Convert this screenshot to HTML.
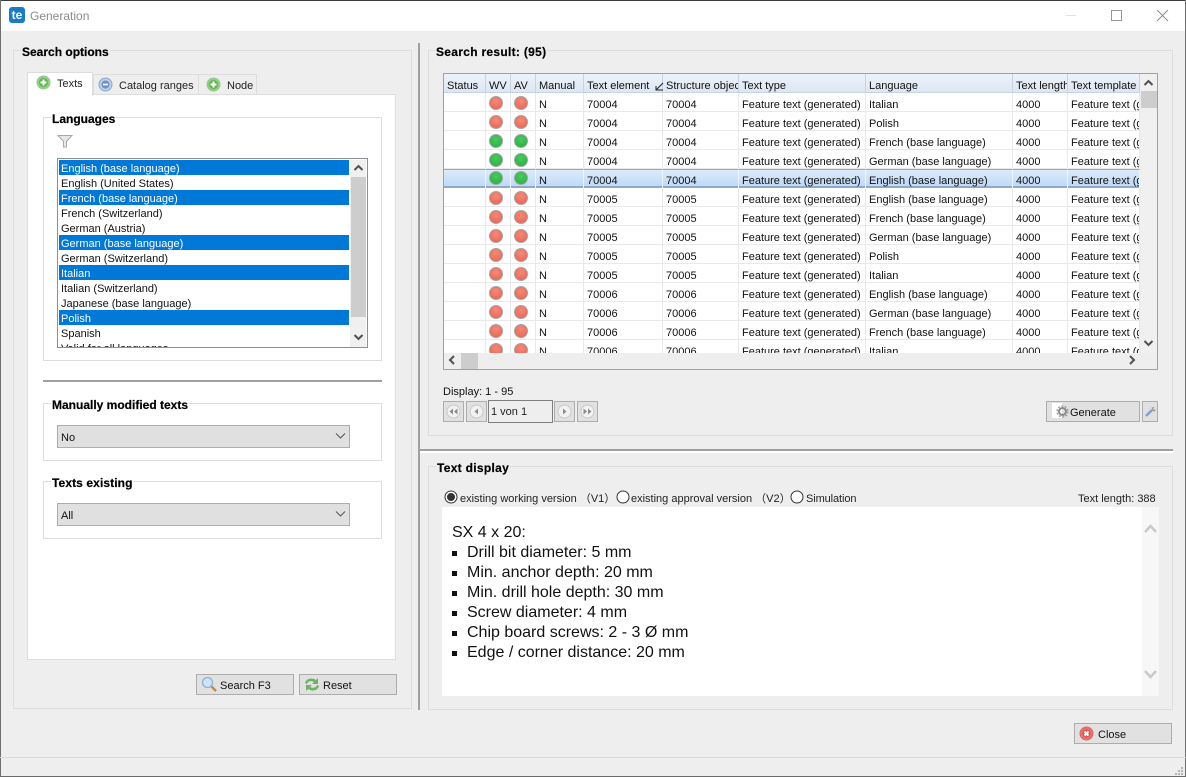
<!DOCTYPE html>
<html><head><meta charset="utf-8"><title>Generation</title>
<style>
*{box-sizing:border-box}
html,body{margin:0;padding:0;width:1186px;height:777px;overflow:hidden;background:#eee;font:11px "Liberation Sans",sans-serif;color:#111}
div,span,svg{position:absolute}
.fs{border:1px solid #ddd}
.lg{font-weight:bold;font-size:12px;color:#000;background:#eee;padding:0 1px;line-height:13px;white-space:nowrap;-webkit-text-stroke:.2px #000}
.lgw{background:#fff}
.t{white-space:nowrap;line-height:13px}
.x{font-size:16px;line-height:20px}
.b{left:452px;width:5px;height:5px;background:#111}
.sel{position:absolute;left:1px;width:290px;height:15px;line-height:19px;padding-left:2px;white-space:nowrap}
.on{background:#0078d7;color:#fff}
.btn{background:#e1e1e1;border:1px solid #adadad}
.dd{background:#e0e0e0;border:1px solid #adadad;line-height:24px;padding-left:3px}
.pg{background:#e1e1e1;border:1px solid #adadad;width:21px;height:21px;top:401px}
table{position:absolute;left:0;top:0;border-collapse:separate;border-spacing:0;table-layout:fixed;width:696px}
td,th{height:19px;padding:6px 0 0 3px;overflow:hidden;white-space:nowrap;font-weight:normal;text-align:left;vertical-align:top;border-right:1px solid #e9e9e9;box-shadow:inset 0 -1px 0 #e9e9e9;font-size:11px;line-height:13px;position:relative;color:#111}
th{border-right:1px solid #c8d3e2;box-shadow:inset 0 -1px 0 #c9d3e0;background:linear-gradient(#eef3fa,#dbe6f3)}
tr.s td{background:linear-gradient(#dcebfb,#bcd7f7);border-top:1px solid #8fa9c9;padding-top:5px;box-shadow:inset 0 -2px 0 #8fa9c9;border-right-color:#eef4fc}
.d{width:14px;height:14px;border-radius:50%;top:3px;left:3px;border:1px solid #a5a5a5}
tr.s .d{top:1px}
.r{background:radial-gradient(circle at 50% 35%,#f58a78,#ea5f4e)}
.g{background:radial-gradient(circle at 50% 35%,#4cc95f,#1fb03c)}
</style></head><body>
<!-- window chrome -->
<div style="left:0;top:0;width:1186px;height:31px;background:#fff"></div>
<div style="left:0;top:0;width:1186px;height:1px;background:#3c3c3c"></div>
<div style="left:0;top:0;width:1px;height:777px;background:#6f6f6f"></div>
<div style="left:1185px;top:0;width:1px;height:777px;background:#6f6f6f"></div>
<div style="left:0;top:776px;width:1186px;height:1px;background:#6a6a6a"></div>
<div style="left:0;top:757px;width:1186px;height:1px;background:#d9d9d9"></div>
<div style="left:9px;top:7px;width:16px;height:16px;border-radius:3px;background:#1a7cc4;color:#fff;font:bold 12px/17px 'Liberation Sans',sans-serif;text-align:center">te</div>
<div class="t" style="left:30px;top:9px;font-size:12px;color:#8a8a8a;line-height:14px">Generation</div>
<div style="left:1066px;top:15px;width:10px;height:1px;background:#e2e2e2"></div>
<div style="left:1111px;top:10px;width:11px;height:11px;border:1px solid #999"></div>
<svg style="left:1156px;top:9px" width="13" height="13"><path d="M1 1L12 12M12 1L1 12" stroke="#8c8c8c" stroke-width="1" fill="none"/></svg>

<!-- left panel -->
<div class="fs" style="left:13px;top:50px;width:399px;height:659px"></div>
<div class="lg" style="left:21px;top:46px">Search options</div>
<div style="left:27px;top:94px;width:369px;height:566px;background:#fff;border:1px solid #ddd"></div>
<div style="left:27px;top:72px;width:66px;height:24px;background:#fff;border:1px solid #ddd;border-bottom:0"></div>
<div style="left:93px;top:74px;width:106px;height:21px;background:#eee;border:1px solid #ddd"></div>
<div style="left:198px;top:74px;width:59px;height:21px;background:#eee;border:1px solid #ddd"></div>
<svg style="left:36px;top:75px" width="15" height="15"><circle cx="7.500" cy="7.500" r="6.500" fill="#8fd07f" stroke="#9cc79a"/><circle cx="7.500" cy="7.500" r="4.500" fill="#5fb552"/><path d="M7.500 4.500v6M4.500 7.500h6" stroke="#fff" stroke-width="2"/></svg>
<div class="t" style="left:57px;top:78px;color:#222">Texts</div>
<svg style="left:98px;top:77px" width="15" height="15"><circle cx="7.500" cy="7.500" r="6.500" fill="#b9cfea" stroke="#8fa9cc"/><circle cx="7.500" cy="7.500" r="4" fill="#6f93c4"/><path d="M5 7.500h5" stroke="#fff" stroke-width="1.600"/></svg>
<div class="t" style="left:119px;top:80px;color:#222">Catalog ranges</div>
<svg style="left:206px;top:77px" width="15" height="15"><circle cx="7.500" cy="7.500" r="6.500" fill="#8fd07f" stroke="#9cc79a"/><circle cx="7.500" cy="7.500" r="4.500" fill="#5fb552"/><path d="M7.500 4.500v6M4.500 7.500h6" stroke="#fff" stroke-width="2"/></svg>
<div class="t" style="left:227px;top:80px;color:#222">Node</div>

<div class="fs" style="left:43px;top:117px;width:339px;height:244px"></div>
<div class="lg lgw" style="left:51px;top:113px">Languages</div>
<svg style="left:57px;top:134px" width="16" height="14"><path d="M1 1.500H15L9.500 7.500V13H6.500V7.500Z" fill="#e6e6e6" stroke="#a9a9a9"/></svg>
<div style="left:57px;top:158px;width:311px;height:190px;background:#fff;border:1px solid #8e8e9a;overflow:hidden">
 <div class="sel on" style="top:1px">English (base language)</div>
 <div class="sel" style="top:16px">English (United States)</div>
 <div class="sel on" style="top:31px">French (base language)</div>
 <div class="sel" style="top:46px">French (Switzerland)</div>
 <div class="sel" style="top:61px">German (Austria)</div>
 <div class="sel on" style="top:76px">German (base language)</div>
 <div class="sel" style="top:91px">German (Switzerland)</div>
 <div class="sel on" style="top:106px">Italian</div>
 <div class="sel" style="top:121px">Italian (Switzerland)</div>
 <div class="sel" style="top:136px">Japanese (base language)</div>
 <div class="sel on" style="top:151px">Polish</div>
 <div class="sel" style="top:166px">Spanish</div>
 <div class="sel" style="top:181px">Valid for all languages</div>
 <div style="left:292px;top:1px;width:16px;height:187px;background:#f0f0f0"></div>
 <div style="left:293px;top:18px;width:15px;height:140px;background:#cdcdcd"></div>
 <svg style="left:293px;top:4px" width="15" height="10"><path d="M3.500 7L7.500 3L11.500 7" stroke="#505050" stroke-width="2" fill="none"/></svg>
 <svg style="left:293px;top:173px" width="15" height="10"><path d="M3.500 3L7.500 7L11.500 3" stroke="#505050" stroke-width="2" fill="none"/></svg>
</div>
<div style="left:43px;top:380px;width:339px;height:2px;background:#a0a0a0"></div>

<div class="fs" style="left:43px;top:403px;width:339px;height:58px"></div>
<div class="lg lgw" style="left:51px;top:399px">Manually modified texts</div>
<div class="dd" style="left:57px;top:425px;width:293px;height:23px">No</div>
<svg style="left:335px;top:432px" width="11" height="8"><path d="M1 1.500L5.500 6L10 1.500" stroke="#555" stroke-width="1" fill="none"/></svg>

<div class="fs" style="left:43px;top:481px;width:339px;height:58px"></div>
<div class="lg lgw" style="left:51px;top:477px;letter-spacing:.1px">Texts existing</div>
<div class="dd" style="left:57px;top:503px;width:293px;height:23px">All</div>
<svg style="left:335px;top:510px" width="11" height="8"><path d="M1 1.500L5.500 6L10 1.500" stroke="#555" stroke-width="1" fill="none"/></svg>

<div class="btn" style="left:196px;top:674px;width:98px;height:21px"></div>
<svg style="left:201px;top:676px" width="16" height="17"><circle cx="6.500" cy="6.500" r="5" fill="#cfe3f7" stroke="#8fb0d4" stroke-width="1.300"/><path d="M10.500 10.500L15 15" stroke="#c08a50" stroke-width="2.500"/></svg>
<div class="t" style="left:220px;top:680px">Search F3</div>
<div class="btn" style="left:299px;top:674px;width:98px;height:21px"></div>
<svg style="left:304px;top:676px" width="16" height="17"><path d="M1 7C2 3 7 1 12 4L14 2V8H8L10 6C7 4.500 4 5 3 8Z" fill="#6eb35f"/><path d="M15 10C14 14 9 16 4 13L2 15V9H8L6 11C9 12.500 12 12 13 9Z" fill="#6eb35f"/></svg>
<div class="t" style="left:323px;top:680px">Reset</div>

<!-- splitters -->
<div style="left:418px;top:43px;width:2px;height:667px;background:#a0a0a0"></div>
<div style="left:420px;top:449px;width:753px;height:2px;background:#a0a0a0"></div>
<div style="left:420px;top:451px;width:753px;height:2px;background:#fff"></div>

<!-- search result -->
<div class="fs" style="left:428px;top:50px;width:745px;height:386px"></div>
<div class="lg" style="left:435px;top:46px;letter-spacing:.3px">Search result: (95)</div>
<div style="left:443px;top:73px;width:715px;height:297px;background:#eee;border:1px solid #8da3bf"></div>
<div style="left:444px;top:74px;width:696px;height:279px;overflow:hidden;background:#fff">
<table>
<colgroup><col style="width:42px"><col style="width:25px"><col style="width:25px"><col style="width:48px"><col style="width:79px"><col style="width:76px"><col style="width:127px"><col style="width:147px"><col style="width:55px"><col style="width:72px"></colgroup>
<tr><th>Status</th><th>WV</th><th>AV</th><th>Manual</th><th>Text element</th><th>Structure object</th><th>Text type</th><th>Language</th><th>Text length</th><th>Text template</th></tr>
<tr><td></td><td><span class="d r"></span></td><td><span class="d r"></span></td><td>N</td><td>70004</td><td>70004</td><td>Feature text (generated)</td><td>Italian</td><td>4000</td><td>Feature text (generated)</td></tr>
<tr><td></td><td><span class="d r"></span></td><td><span class="d r"></span></td><td>N</td><td>70004</td><td>70004</td><td>Feature text (generated)</td><td>Polish</td><td>4000</td><td>Feature text (generated)</td></tr>
<tr><td></td><td><span class="d g"></span></td><td><span class="d g"></span></td><td>N</td><td>70004</td><td>70004</td><td>Feature text (generated)</td><td>French (base language)</td><td>4000</td><td>Feature text (generated)</td></tr>
<tr><td></td><td><span class="d g"></span></td><td><span class="d g"></span></td><td>N</td><td>70004</td><td>70004</td><td>Feature text (generated)</td><td>German (base language)</td><td>4000</td><td>Feature text (generated)</td></tr>
<tr class="s"><td></td><td><span class="d g"></span></td><td><span class="d g"></span></td><td>N</td><td>70004</td><td>70004</td><td>Feature text (generated)</td><td>English (base language)</td><td>4000</td><td>Feature text (generated)</td></tr>
<tr><td></td><td><span class="d r"></span></td><td><span class="d r"></span></td><td>N</td><td>70005</td><td>70005</td><td>Feature text (generated)</td><td>English (base language)</td><td>4000</td><td>Feature text (generated)</td></tr>
<tr><td></td><td><span class="d r"></span></td><td><span class="d r"></span></td><td>N</td><td>70005</td><td>70005</td><td>Feature text (generated)</td><td>French (base language)</td><td>4000</td><td>Feature text (generated)</td></tr>
<tr><td></td><td><span class="d r"></span></td><td><span class="d r"></span></td><td>N</td><td>70005</td><td>70005</td><td>Feature text (generated)</td><td>German (base language)</td><td>4000</td><td>Feature text (generated)</td></tr>
<tr><td></td><td><span class="d r"></span></td><td><span class="d r"></span></td><td>N</td><td>70005</td><td>70005</td><td>Feature text (generated)</td><td>Polish</td><td>4000</td><td>Feature text (generated)</td></tr>
<tr><td></td><td><span class="d r"></span></td><td><span class="d r"></span></td><td>N</td><td>70005</td><td>70005</td><td>Feature text (generated)</td><td>Italian</td><td>4000</td><td>Feature text (generated)</td></tr>
<tr><td></td><td><span class="d r"></span></td><td><span class="d r"></span></td><td>N</td><td>70006</td><td>70006</td><td>Feature text (generated)</td><td>English (base language)</td><td>4000</td><td>Feature text (generated)</td></tr>
<tr><td></td><td><span class="d r"></span></td><td><span class="d r"></span></td><td>N</td><td>70006</td><td>70006</td><td>Feature text (generated)</td><td>German (base language)</td><td>4000</td><td>Feature text (generated)</td></tr>
<tr><td></td><td><span class="d r"></span></td><td><span class="d r"></span></td><td>N</td><td>70006</td><td>70006</td><td>Feature text (generated)</td><td>French (base language)</td><td>4000</td><td>Feature text (generated)</td></tr>
<tr><td></td><td><span class="d r"></span></td><td><span class="d r"></span></td><td>N</td><td>70006</td><td>70006</td><td>Feature text (generated)</td><td>Italian</td><td>4000</td><td>Feature text (generated)</td></tr>
</table>
<svg style="left:211px;top:8px" width="9" height="9"><path d="M1 8L8 1M1 4V8H8" stroke="#222" stroke-width="1" fill="none"/></svg>
</div>
<div style="left:1141px;top:74px;width:16px;height:279px;background:#f0f0f0"></div>
<div style="left:1141px;top:91px;width:16px;height:17px;background:#cdcdcd"></div>
<svg style="left:1141px;top:78px" width="15" height="10"><path d="M3.500 7L7.500 3L11.500 7" stroke="#505050" stroke-width="2" fill="none"/></svg>
<svg style="left:1141px;top:338px" width="15" height="10"><path d="M3.500 3L7.500 7L11.500 3" stroke="#505050" stroke-width="2" fill="none"/></svg>
<div style="left:461px;top:353px;width:17px;height:16px;background:#cdcdcd"></div>
<svg style="left:447px;top:354px" width="10" height="12"><path d="M7 2L3 6L7 10" stroke="#505050" stroke-width="2" fill="none"/></svg>
<svg style="left:1127px;top:354px" width="10" height="12"><path d="M3 2L7 6L3 10" stroke="#505050" stroke-width="2" fill="none"/></svg>

<div class="t" style="left:443px;top:386px">Display: 1 - 95</div>
<div class="pg" style="left:443px"></div>
<svg style="left:445px;top:403px" width="17" height="17"><circle cx="8.500" cy="8.500" r="6.500" fill="#f2f2f2" stroke="#c8c8c8"/><path d="M8 5.500V11.500L4.500 8.500ZM12.500 5.500V11.500L9 8.500Z" fill="#8b8b8b"/></svg>
<div class="pg" style="left:466px"></div>
<svg style="left:468px;top:403px" width="17" height="17"><circle cx="8.500" cy="8.500" r="6.500" fill="#f2f2f2" stroke="#c8c8c8"/><path d="M10 5.500V11.500L6.500 8.500Z" fill="#8b8b8b"/></svg>
<div style="left:488px;top:400px;width:65px;height:23px;background:#eee;border:1px solid #7f7f7f;line-height:23px;padding-left:2px;color:#222">1 von 1</div>
<div class="pg" style="left:554px"></div>
<svg style="left:556px;top:403px" width="17" height="17"><circle cx="8.500" cy="8.500" r="6.500" fill="#f2f2f2" stroke="#c8c8c8"/><path d="M7 5.500V11.500L10.500 8.500Z" fill="#8b8b8b"/></svg>
<div class="pg" style="left:577px"></div>
<svg style="left:579px;top:403px" width="17" height="17"><circle cx="8.500" cy="8.500" r="6.500" fill="#f2f2f2" stroke="#c8c8c8"/><path d="M4.500 5.500V11.500L8 8.500ZM9 5.500V11.500L12.500 8.500Z" fill="#8b8b8b"/></svg>

<div class="btn" style="left:1046px;top:401px;width:94px;height:21px"></div>
<div style="left:1052px;top:403px;width:10px;height:15px;background:#fff"></div>
<svg style="left:1056px;top:405px" width="13" height="13"><circle cx="6.500" cy="6.500" r="3.500" fill="none" stroke="#888" stroke-width="2"/><circle cx="6.500" cy="6.500" r="5.500" fill="none" stroke="#999" stroke-width="1.300" stroke-dasharray="2 1.500"/></svg>
<div class="t" style="left:1070px;top:407px">Generate</div>
<div class="btn" style="left:1142px;top:401px;width:16px;height:21px"></div>
<svg style="left:1144px;top:405px" width="12" height="13"><path d="M2 11L8 5" stroke="#7f9fd6" stroke-width="2.500"/><path d="M7.500 2.500L10.500 2L9 4L10 5L11.500 3.500L11 6.500L8.500 6Z" fill="#9a9a9a"/></svg>

<!-- text display -->
<div class="fs" style="left:428px;top:466px;width:745px;height:244px"></div>
<div class="lg" style="left:436px;top:462px;letter-spacing:.3px">Text display</div>
<svg style="left:444px;top:490px" width="14" height="14"><circle cx="7" cy="7" r="6" fill="#fff" stroke="#333"/><circle cx="7" cy="7" r="4" fill="#333"/></svg>
<div class="t" style="left:460px;top:493px;color:#222">existing working version （V1）</div>
<svg style="left:616px;top:490px" width="14" height="14"><circle cx="7" cy="7" r="6" fill="#fff" stroke="#333"/></svg>
<div class="t" style="left:631px;top:493px;color:#222">existing approval version （V2）</div>
<svg style="left:790px;top:490px" width="14" height="14"><circle cx="7" cy="7" r="6" fill="#fff" stroke="#333"/></svg>
<div class="t" style="left:806px;top:493px;color:#222;letter-spacing:-.1px">Simulation</div>
<div class="t" style="left:1078px;top:493px;color:#222">Text length: 388</div>
<div style="left:442px;top:507px;width:717px;height:189px;background:#fff"></div>
<div style="left:1142px;top:507px;width:17px;height:189px;background:#f7f7f7"></div>
<svg style="left:1143px;top:522px" width="15" height="13"><path d="M2 10L7.500 4L13 10" stroke="#c9c9c9" stroke-width="2.500" fill="none"/></svg>
<svg style="left:1143px;top:668px" width="15" height="13"><path d="M2 3L7.500 9L13 3" stroke="#c9c9c9" stroke-width="2.500" fill="none"/></svg>
<div class="t x" style="left:452px;top:523px">SX 4 x 20:</div>
<div class="b" style="top:551px"></div>
<div class="t x" style="left:467px;top:543px">Drill bit diameter: 5 mm</div>
<div class="b" style="top:571px"></div>
<div class="t x" style="left:467px;top:563px">Min. anchor depth: 20 mm</div>
<div class="b" style="top:591px"></div>
<div class="t x" style="left:467px;top:583px">Min. drill hole depth: 30 mm</div>
<div class="b" style="top:611px"></div>
<div class="t x" style="left:467px;top:603px">Screw diameter: 4 mm</div>
<div class="b" style="top:631px"></div>
<div class="t x" style="left:467px;top:623px">Chip board screws: 2 - 3 Ø mm</div>
<div class="b" style="top:651px"></div>
<div class="t x" style="left:467px;top:643px">Edge / corner distance: 20 mm</div>

<!-- close -->
<div class="btn" style="left:1074px;top:723px;width:98px;height:21px"></div>
<svg style="left:1079px;top:726px" width="15" height="15"><circle cx="7.500" cy="7.500" r="6.500" fill="#ee6f68" stroke="#c9746f"/><circle cx="7.500" cy="7.500" r="4" fill="#e0524c"/><path d="M5.500 5.500L9.500 9.500M9.500 5.500L5.500 9.500" stroke="#fff" stroke-width="2"/></svg>
<div class="t" style="left:1098px;top:729px">Close</div>
<svg style="left:1174px;top:766px" width="10" height="10"><path d="M7 1h2v2H7zM4 4h2v2H4zM7 4h2v2H7zM1 7h2v2H1zM4 7h2v2H4zM7 7h2v2H7z" fill="#b5b5b5"/></svg>
</body></html>
